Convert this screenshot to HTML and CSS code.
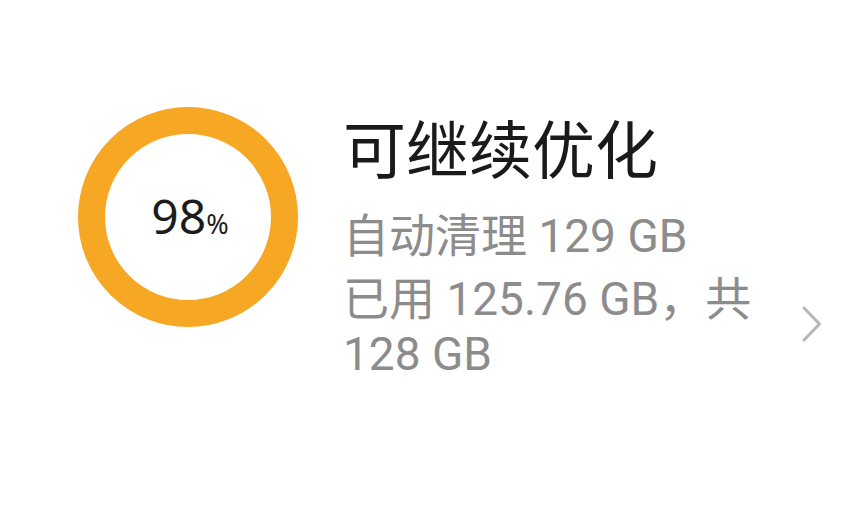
FILE: index.html
```html
<!DOCTYPE html>
<html lang="zh-CN">
<head>
<meta charset="utf-8">
<title>存储</title>
<link rel="stylesheet" href="styles.css">
</head>
<body>
<div class="card">
  <div class="ring">
    <span class="pct"><span class="num">98</span><span class="sign">%</span></span>
  </div>
  <div class="info">
    <div class="title">可继续优化</div>
    <div class="line first">自动清理 129 GB</div>
    <div class="line">已用 125.76 GB，共 128 GB</div>
  </div>
  <svg class="chev" width="24" height="40" viewBox="0 0 24 40">
    <path d="M4 4 L19.5 20 L4 36" fill="none" stroke="#b8b8b8" stroke-width="3.2" stroke-linecap="round" stroke-linejoin="round"/>
  </svg>
</div>
</body>
</html>
```
FILE: styles.css
```css
html, body {
  margin: 0;
  padding: 0;
  background: #ffffff;
}
body {
  width: 857px;
  height: 514px;
  overflow: hidden;
  font-family: Roboto, "Noto Sans CJK SC", sans-serif;
}
.card {
  display: flex;
  align-items: flex-start;
  padding-left: 78px;
}
.ring {
  box-sizing: border-box;
  width: 220px;
  height: 220px;
  margin-top: 107px;
  border: 27px solid #f6a724;
  border-radius: 50%;
  display: flex;
  align-items: center;
  justify-content: center;
  flex-shrink: 0;
}
.pct {
  font-family: "Noto Sans", sans-serif;
  color: #1c1c1c;
  display: flex;
  align-items: baseline;
  margin-left: 4px;
  margin-top: -2px;
}
.num {
  font-size: 48px;
  line-height: 1;
}
.sign {
  font-size: 27px;
  line-height: 1;
  margin-left: 0;
}
.info {
  width: 455px;
  margin-left: 45px;
  margin-top: 117px;
  flex-shrink: 0;
}
.title {
  font-size: 63px;
  line-height: 70px;
  color: #1a1a1a;
}
.line {
  font-size: 46px;
  line-height: 55px;
  color: #8c8c8c;
}
.line.first {
  margin-top: 22px;
  margin-bottom: 8px;
}
.chev {
  margin-top: 304px;
  margin-left: 2px;
  flex-shrink: 0;
}
```
